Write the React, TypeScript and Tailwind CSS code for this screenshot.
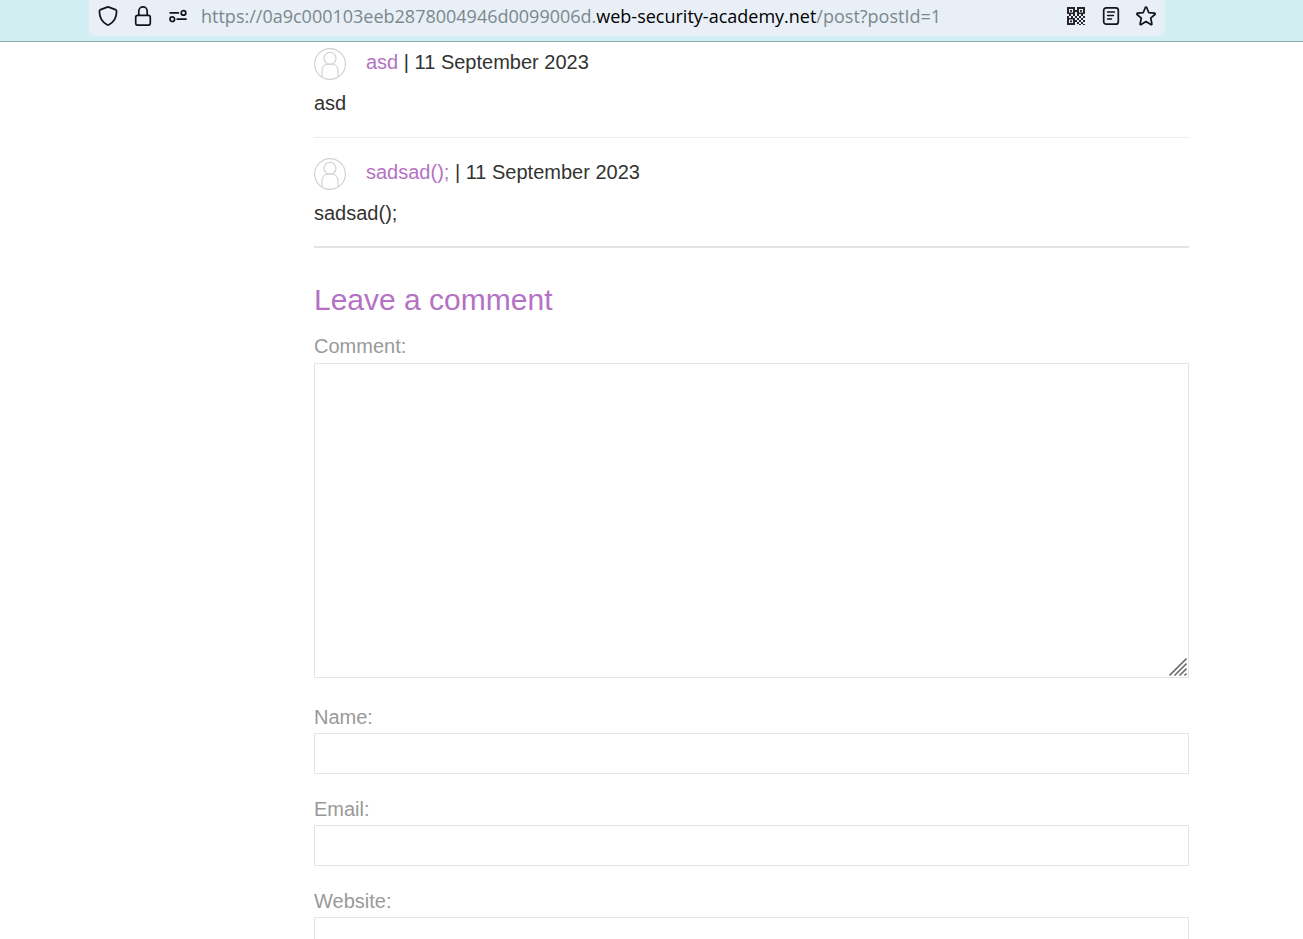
import { useState } from "react";
import type { ReactNode } from "react";

const comments = [
  { author: "asd", date: "11 September 2023", body: "asd" },
  { author: "sadsad();", date: "11 September 2023", body: "sadsad();" },
];

const fields = [
  { id: "name", label: "Name:", type: "text" },
  { id: "email", label: "Email:", type: "email" },
  { id: "website", label: "Website:", type: "text" },
];

function ShieldIcon() {
  return (
    <svg className="size-5" viewBox="0 0 20 20" fill="none" stroke="#15141a" strokeWidth="1.7" strokeLinejoin="round">
      <path d="M9.200 1.100c.5-.2 1.100-.2 1.600 0l6.600 2.500c.7.3 1.200.9 1.200 1.600 0 6-2.600 10.700-7.700 13.500-.6.300-1.200.300-1.800 0C4 15.900 1.400 11.200 1.400 5.200c0-.7.5-1.300 1.200-1.600Z" />
    </svg>
  );
}

function LockIcon() {
  return (
    <svg className="size-5" viewBox="0 0 20 20" fill="none" stroke="#15141a" strokeWidth="1.7">
      <rect x="2.700" y="9.400" width="14.600" height="9.800" rx="2" />
      <path d="M5.800 9.400V5a4.200 4.200 0 0 1 8.400 0v4.400" />
    </svg>
  );
}

function PermissionsIcon() {
  return (
    <svg className="size-5" viewBox="0 0 20 20" fill="none" stroke="#15141a" strokeWidth="1.7">
      <path d="M1.500 6.900h9.500M8.500 13.200h10.200" />
      <circle cx="15.500" cy="6.900" r="2.300" />
      <circle cx="4.300" cy="13.200" r="2.300" />
    </svg>
  );
}

function QrIcon() {
  return (
    <svg className="size-5" viewBox="0 0 20 20" fill="#26252b">
      <path fillRule="evenodd" d="M1 1h8v7H1ZM3 3v3.500h4V3ZM11 1h8v7h-8ZM13 3v3.500h4V3ZM1 12h8v7H1ZM3 13.500V17h4v-3.500Z" />
      <path d="M4 4h2v1.700H4ZM14 4h2v1.700h-2ZM4 14.500h2v1.700H4ZM9 4h2v2H9ZM3 8h2v2H3ZM1 10h2v2H1ZM5 10h2v2H5ZM7 8h2v2H7ZM9 10h2v2H9ZM11 8h2v2h-2ZM15 8h2v2h-2ZM13 10h2v2h-2ZM17 10h2v2h-2ZM11 12h2v2h-2ZM15 12h2v2h-2ZM9 14h2v2H9ZM13 14h2v2h-2ZM17 14h2v2h-2ZM11 16h2v2h-2ZM15 16h2v2h-2ZM13 18h2v1h-2ZM17 18h2v1h-2Z" />
    </svg>
  );
}

function ReaderIcon() {
  return (
    <svg className="size-5" viewBox="0 0 20 20" fill="none" stroke="#15141a" strokeWidth="1.700">
      <rect x="2.700" y="1.800" width="14.600" height="16.400" rx="2.500" />
      <path d="M6.500 6h7M6.500 9.500h6M6.500 13h4" strokeWidth="1.400" strokeLinecap="round" />
    </svg>
  );
}

function StarIcon() {
  return (
    <svg className="size-5" viewBox="0 0 20 20" fill="none" stroke="#15141a" strokeWidth="1.700" strokeLinejoin="round">
      <path d="M9.300 1.500c.3-.6 1.100-.6 1.400 0l2.100 5.200 5.600.5c.7.100 1 .8.500 1.300l-4.200 3.700 1.200 5.500c.2.700-.5 1.200-1.100.8L10 15.600l-4.800 2.900c-.6.400-1.300-.1-1.100-.8l1.200-5.500-4.200-3.700c-.5-.5-.2-1.200.5-1.300l5.600-.5Z" />
    </svg>
  );
}

function Avatar() {
  return (
    <svg className="size-8 shrink-0" viewBox="0 0 32 32" fill="none" stroke="#cdd0d0" strokeWidth="1.100">
      <circle cx="16" cy="16" r="15.400" />
      <circle cx="16" cy="10.300" r="6" />
      <path d="M8 29V23c0-4.300 2.800-7 6.500-7h3c3.700 0 6.500 2.700 6.500 7v6" />
    </svg>
  );
}

function BarButton({ label, children }: { label: string; children: ReactNode }) {
  return (
    <button type="button" aria-label={label} className="shrink-0">
      {children}
    </button>
  );
}

export default function App() {
  const [comment, setComment] = useState("");

  return (
    <div className="flex h-screen flex-col bg-white font-['Liberation_Sans',Arial,sans-serif] text-xl text-[#333332]">
      <header className="shrink-0 border-b border-[#87a9ae] bg-[#d1eef2] pr-[138px] pb-[5px] pl-[89px]">
        <div className="flex h-9 items-center rounded-b-md bg-[#e8eff6] px-[9px] pb-1">
          <div className="flex gap-[15px]">
            <BarButton label="Tracking protection"><ShieldIcon /></BarButton>
            <BarButton label="Connection security"><LockIcon /></BarButton>
            <BarButton label="Permissions"><PermissionsIcon /></BarButton>
          </div>
          <div className="ml-[13px] min-w-0 flex-1 truncate font-['Open_Sans',sans-serif] text-lg leading-7 text-[#7b888b]">
            https://0a9c000103eeb2878004946d0099006d.
            <span className="text-black">web-security-academy.net</span>
            /post?postId=1
          </div>
          <div className="flex gap-[15px]">
            <BarButton label="QR code"><QrIcon /></BarButton>
            <BarButton label="Reader view"><ReaderIcon /></BarButton>
            <BarButton label="Bookmark"><StarIcon /></BarButton>
          </div>
        </div>
      </header>

      <main className="min-h-0 flex-1 overflow-y-auto pt-[6px] pr-[114px] pb-10 pl-[314px] [scrollbar-width:none]">
        <section className="flex flex-col gap-5 border-b-2 border-[#e4e4e4] pb-[21px]">
          {comments.map((item) => (
            <article key={item.author} className="not-last:border-b not-last:border-[#ececec] not-last:pb-[22px]">
              <div className="flex gap-5">
                <Avatar />
                <p className="leading-7">
                  <a href="#author" className="text-[#b472c4]">{item.author}</a> | {item.date}
                </p>
              </div>
              <p className="mt-[11px] leading-6">{item.body}</p>
            </article>
          ))}
        </section>

        <form className="mt-[34px] flex flex-col">
          <h2 className="text-[30px] leading-9 text-[#b472c4]">Leave a comment</h2>
          <label htmlFor="comment" className="mt-4 leading-6 text-[#999999]">Comment:</label>
          <div className="relative mt-[5px] flex">
            <textarea
              id="comment"
              value={comment}
              onChange={(event) => setComment(event.target.value)}
              className="h-[315px] w-full resize-none border border-[#e4e4e4] p-2 outline-none"
            />
            <svg className="pointer-events-none absolute right-[2px] bottom-[2px] size-[18px]" viewBox="0 0 18 18" stroke="#6f6f73" strokeWidth="1.600">
              <path d="M.5 17.500 17.500.5M5.500 17.500l12-12M10.500 17.500l7-7M15.500 17.500l2-2" />
            </svg>
          </div>
          <div className="mt-[27px] flex flex-col gap-[23px]">
            {fields.map((field) => (
              <div key={field.id} className="flex flex-col gap-1">
                <label htmlFor={field.id} className="leading-6 text-[#999999]">{field.label}</label>
                <input
                  id={field.id}
                  type={field.type}
                  className="h-[41px] w-full border border-[#e4e4e4] px-2 outline-none"
                />
              </div>
            ))}
          </div>
        </form>
      </main>
    </div>
  );
}
